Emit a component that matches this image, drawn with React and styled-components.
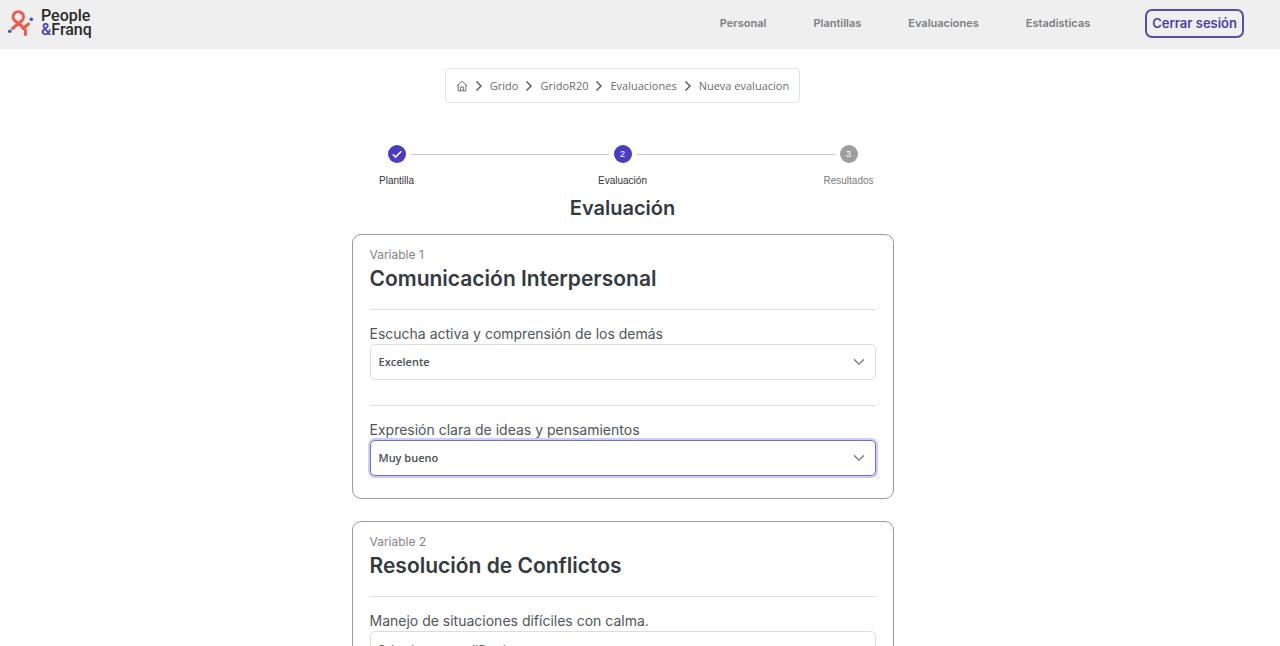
import React from "react";
import styled, { createGlobalStyle, css } from "styled-components";

const GlobalStyle = createGlobalStyle`
  * { box-sizing: border-box; }
  body {
    margin: 0;
    background: #fff;
    color: #343a40;
    font-family: Inter, "Liberation Sans", sans-serif;
  }
`;

const Page = styled.div`
  height: 100vh;
  overflow: hidden;
`;

const Header = styled.header`
  display: flex;
  align-items: center;
  justify-content: space-between;
  height: 49px;
  padding: 0 36px 3px 7px;
  background: #efefef;
`;

const Brand = styled.a`
  display: flex;
  align-items: center;
  gap: 6px;
  color: #2b2b2b;
  text-decoration: none;
`;

const BrandName = styled.span`
  display: flex;
  flex-direction: column;
  font: 500 16px/14px Roboto, sans-serif;
`;

const Ampersand = styled.span`
  color: #4840c0;
`;

const Nav = styled.nav`
  display: flex;
  align-items: center;
  gap: 47px;
`;

const NavLink = styled.a`
  color: #7b7e83;
  font-size: 11px;
  line-height: 16px;
  font-weight: 600;
  text-decoration: none;
`;

const LogoutButton = styled.button`
  height: 29px;
  margin-left: 8px;
  padding: 0 5px;
  border: 2px solid #554cae;
  border-radius: 7px;
  background: transparent;
  color: #4a3fae;
  font: 600 13px/20px Inter, sans-serif;
`;

const Main = styled.main`
  display: flex;
  flex-direction: column;
  align-items: center;
  padding: 19px 35px 40px 0;
`;

const Breadcrumb = styled.nav`
  display: flex;
  align-items: center;
  gap: 6px;
  height: 35px;
  padding: 0 10px;
  border: 1px solid #e4e5e7;
  border-radius: 4px;
`;

const Crumb = styled.a`
  display: flex;
  color: #6c6c6c;
  font: 400 11px/16px "Open Sans", sans-serif;
  text-decoration: none;
`;

const Steps = styled.ol`
  display: flex;
  width: 678px;
  max-width: 100%;
  margin: 42px 0 0;
  padding: 0;
  list-style: none;
`;

const Step = styled.li`
  flex: 1;
  display: flex;
  flex-direction: column;
  align-items: center;
  gap: 10px;
  color: ${(p) => (p.$pending ? "#7a7a7a" : "#333")};
  font: 400 10px/16px "Liberation Sans", sans-serif;
`;

const StepTrack = styled.div`
  display: flex;
  align-items: center;
  gap: 5px;
  width: 100%;
`;

const StepLine = styled.span`
  flex: 1;
  height: 1px;
  background: ${(p) => (p.$hidden ? "transparent" : "#cccccc")};
`;

const StepDot = styled.span`
  display: flex;
  align-items: center;
  justify-content: center;
  width: 18px;
  height: 18px;
  border-radius: 50%;
  background: ${(p) => (p.$pending ? "#9e9e9e" : "#4b3bc4")};
  color: #fff;
  font-size: 9px;
`;

const Title = styled.h1`
  margin: 7px 0 14px;
  font-size: 20px;
  line-height: 24px;
  font-weight: 600;
`;

const Card = styled.section`
  width: 542px;
  max-width: 100%;
  margin-bottom: 22px;
  padding: 12px 17px 22px;
  border: 1px solid #9b9b9b;
  border-radius: 9px;
`;

const Eyebrow = styled.p`
  margin: 0;
  color: #858585;
  font-size: 12px;
  line-height: 16px;
`;

const CardTitle = styled.h2`
  margin: 4px 0 18px;
  font-size: 21px;
  line-height: 24px;
  font-weight: 600;
`;

const Field = styled.div`
  padding: 14px 0 25px;
  border-top: 1px solid #dfdfdf;
  &:last-child { padding-bottom: 0; }
`;

const Label = styled.label`
  display: block;
  color: #50555a;
  font-size: 14px;
  line-height: 20px;
`;

const SelectBox = styled.div`
  display: grid;
  align-items: center;
  color: #6c757d;
  & > * { grid-area: 1 / 1; }
  & > svg { justify-self: end; margin-right: 11px; pointer-events: none; }
`;

const Select = styled.select`
  width: 100%;
  height: 36px;
  padding: 0 8px;
  appearance: none;
  border: 1px solid #dcdcdc;
  border-radius: 5px;
  background: #fff;
  color: #495057;
  font: 600 11px/16px "Open Sans", sans-serif;
  ${(p) => p.$active && css`
    border-color: #6f72c8;
    box-shadow: 0 0 0 2px #c7cffa;
  `}
`;

const Logo = () => (
  <svg width="28" height="30" viewBox="0 0 28 30" fill="none" aria-hidden="true">
    <path d="M5.5 20.5 L15 12.5 A5.2 5.2 0 1 0 7.6 12.5 L17 20 Q18.5 21.5 18.5 23.5 V26.5 M16 20.5 L21.5 16" stroke="#ef5b4b" strokeWidth="3" strokeLinecap="round" strokeLinejoin="round" />
    <circle cx="24.3" cy="11.3" r="1.8" fill="#4850bd" />
    <circle cx="2.8" cy="23.3" r="1.8" fill="#4850bd" />
  </svg>
);

const Chevron = () => (
  <svg width="10" height="12" viewBox="0 0 10 12" fill="none" aria-hidden="true">
    <path d="M2.500 1.500 L7 6 L2.500 10.500" stroke="#555" strokeWidth="1.400" />
  </svg>
);

const Home = () => (
  <svg width="12" height="12" viewBox="0 0 12 12" fill="none" stroke="#707070" aria-hidden="true">
    <path d="M0.700 6 L6 1.300 L11.300 6 M2.200 5 V10.800 H9.800 V5 M4.600 10.800 V7 H7.400 V10.800" />
  </svg>
);

const Check = () => (
  <svg width="12" height="12" viewBox="0 0 12 12" fill="none" aria-hidden="true">
    <path d="M1.800 6.200 L4.600 9 L10.300 3.300" stroke="#fff" strokeWidth="1.600" />
  </svg>
);

const Arrow = () => (
  <svg width="12" height="12" viewBox="0 0 12 12" fill="none" aria-hidden="true">
    <path d="M1.500 3.700 L6 8.200 L10.500 3.700" stroke="currentColor" strokeWidth="1.300" strokeLinecap="round" />
  </svg>
);

const links = ["Personal", "Plantillas", "Evaluaciones", "Estadisticas"];
const crumbs = ["Grido", "GridoR20", "Evaluaciones", "Nueva evaluacion"];
const steps = ["Plantilla", "Evaluación", "Resultados"];
const placeholder = "Seleccione una calificacion";
const variables = [
  {
    name: "Comunicación Interpersonal",
    fields: [
      { id: "escucha", label: "Escucha activa y comprensión de los demás", value: "Excelente" },
      { id: "expresion", label: "Expresión clara de ideas y pensamientos", value: "Muy bueno", active: true },
    ],
  },
  {
    name: "Resolución de Conflictos",
    fields: [{ id: "manejo", label: "Manejo de situaciones difíciles con calma.", value: placeholder }],
  },
];

export default function App() {
  return (
    <Page>
      <GlobalStyle />
      <Header>
        <Brand href="#">
          <Logo />
          <BrandName>
            <span>People</span>
            <span><Ampersand>&amp;</Ampersand>Franq</span>
          </BrandName>
        </Brand>
        <Nav>
          {links.map((l) => <NavLink key={l} href="#">{l}</NavLink>)}
          <LogoutButton type="button">Cerrar sesión</LogoutButton>
        </Nav>
      </Header>
      <Main>
        <Breadcrumb aria-label="Ruta">
          <Crumb href="#" aria-label="Inicio"><Home /></Crumb>
          {crumbs.map((c) => (
            <React.Fragment key={c}>
              <Chevron />
              <Crumb href="#">{c}</Crumb>
            </React.Fragment>
          ))}
        </Breadcrumb>
        <Steps>
          {steps.map((s, i) => (
            <Step key={s} $pending={i === 2}>
              <StepTrack>
                <StepLine $hidden={i === 0} />
                <StepDot $pending={i === 2}>{i === 0 ? <Check /> : i + 1}</StepDot>
                <StepLine $hidden={i === 2} />
              </StepTrack>
              {s}
            </Step>
          ))}
        </Steps>
        <Title>Evaluación</Title>
        {variables.map((v, i) => (
          <Card key={v.name}>
            <Eyebrow>Variable {i + 1}</Eyebrow>
            <CardTitle>{v.name}</CardTitle>
            {v.fields.map((f) => (
              <Field key={f.id}>
                <Label htmlFor={f.id}>{f.label}</Label>
                <SelectBox>
                  <Select id={f.id} defaultValue={f.value} $active={f.active}>
                    <option>{placeholder}</option>
                    <option>Excelente</option>
                    <option>Muy bueno</option>
                  </Select>
                  <Arrow />
                </SelectBox>
              </Field>
            ))}
          </Card>
        ))}
      </Main>
    </Page>
  );
}
